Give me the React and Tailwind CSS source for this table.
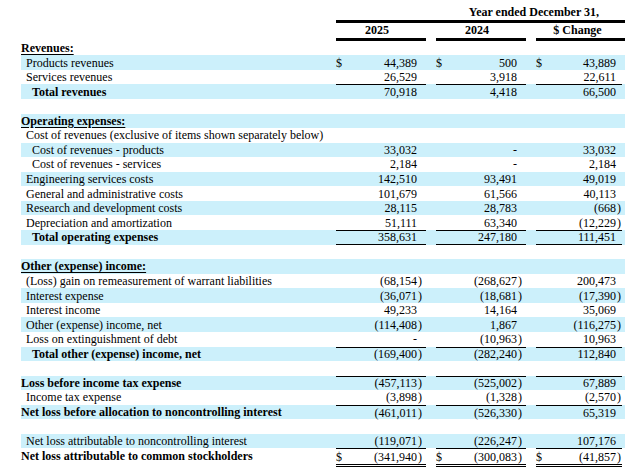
import React from 'react';

// rows of the statement; v = [2025, 2024, $ change]
const rows = [
  { label: 'Revenues:', kind: 'section' },
  { label: 'Products revenues', lvl: 1, shade: true, dollar: true, v: ['44,389', '500', '43,889'] },
  { label: 'Services revenues', lvl: 1, v: ['26,529', '3,918', '22,611'] },
  { label: 'Total revenues', lvl: 2, bold: true, shade: true, top: true, v: ['70,918', '4,418', '66,500'] },
  { blank: true },
  { label: 'Operating expenses:', kind: 'section', shade: true },
  { label: 'Cost of revenues (exclusive of items shown separately below)', lvl: 1 },
  { label: 'Cost of revenues - products', lvl: 2, shade: true, v: ['33,032', '-', '33,032'] },
  { label: 'Cost of revenues - services', lvl: 2, v: ['2,184', '-', '2,184'] },
  { label: 'Engineering services costs', lvl: 1, shade: true, v: ['142,510', '93,491', '49,019'] },
  { label: 'General and administrative costs', lvl: 1, v: ['101,679', '61,566', '40,113'] },
  { label: 'Research and development costs', lvl: 1, shade: true, v: ['28,115', '28,783', '(668)'] },
  { label: 'Depreciation and amortization', lvl: 1, v: ['51,111', '63,340', '(12,229)'] },
  { label: 'Total operating expenses', lvl: 2, bold: true, shade: true, top: true, bottom: true, v: ['358,631', '247,180', '111,451'] },
  { blank: true },
  { label: 'Other (expense) income:', kind: 'section', shade: true },
  { label: '(Loss) gain on remeasurement of warrant liabilities', lvl: 1, v: ['(68,154)', '(268,627)', '200,473'] },
  { label: 'Interest expense', lvl: 1, shade: true, v: ['(36,071)', '(18,681)', '(17,390)'] },
  { label: 'Interest income', lvl: 1, v: ['49,233', '14,164', '35,069'] },
  { label: 'Other (expense) income, net', lvl: 1, shade: true, v: ['(114,408)', '1,867', '(116,275)'] },
  { label: 'Loss on extinguishment of debt', lvl: 1, v: ['-', '(10,963)', '10,963'] },
  { label: 'Total other (expense) income, net', lvl: 2, bold: true, shade: true, top: true, v: ['(169,400)', '(282,240)', '112,840'] },
  { blank: true },
  { label: 'Loss before income tax expense', lvl: 0, bold: true, shade: true, top: true, v: ['(457,113)', '(525,002)', '67,889'] },
  { label: 'Income tax expense', lvl: 1, v: ['(3,898)', '(1,328)', '(2,570)'] },
  { label: 'Net loss before allocation to noncontrolling interest', lvl: 0, bold: true, shade: true, top: true, v: ['(461,011)', '(526,330)', '65,319'] },
  { blank: true },
  { label: 'Net loss attributable to noncontrolling interest', lvl: 1, shade: true, v: ['(119,071)', '(226,247)', '107,176'] },
  { label: 'Net loss attributable to common stockholders', lvl: 0, bold: true, top: true, double: true, dollar: true, v: ['(341,940)', '(300,083)', '(41,857)'] },
];

const cols = ['w-[90px] pr-[4px]', 'ml-[10px] w-[90px] pr-[4px]', 'ml-[10px] w-[86px] pr-[1px]'];
const indent = ['pl-0', 'pl-[5px]', 'pl-[11px]'];

const Amount = ({ value, dollar, row, className }) => {
  const neg = value.startsWith('(');
  const num = neg ? value.slice(0, -1) : value;
  let border = '';
  if (row.top) border += ' border-t border-black';
  if (row.bottom) border += ' border-b border-black';
  // the double rule sits just under the row, so the cell grows past it
  if (row.double) border += ' h-[18.5px] border-b-[3px] border-double border-black';
  else border += ' h-full';
  return (
    <div className={`${className} flex shrink-0 items-center self-start${border}`}>
      <span className="w-[8px]">{dollar ? '$' : ''}</span>
      <span className="flex-1 text-right">{num}</span>
      <span className="w-[5px] pl-[1px]">{neg ? ')' : ''}</span>
    </div>
  );
};

const Row = ({ row }) => {
  if (row.blank) return <div className="h-[14.57px]" />;
  return (
    <div className={`ml-[21px] flex h-[14.57px] w-[604px] leading-[14px] ${row.shade ? 'bg-[#ccf0fb]' : ''}`}>
      <div
        className={`flex w-[315px] shrink-0 items-center whitespace-nowrap ${row.kind === 'section' ? 'font-bold underline underline-offset-[2px]' : indent[row.lvl]} ${row.bold ? 'font-bold' : ''}`}
      >
        {row.label}
      </div>
      {row.v &&
        row.v.map((val, i) => <Amount key={i} value={val} dollar={row.dollar} row={row} className={cols[i]} />)}
    </div>
  );
};

export default function App() {
  return (
    <div className="h-[469px] w-[625px] overflow-hidden bg-white text-[12px] text-black [font-family:'Liberation_Serif',serif]">
      {/* column headings */}
      <div className="flex h-[20px] items-end justify-end pb-[1px] pr-[26px] font-bold leading-[14px]">
        Year ended December 31,
      </div>
      <div className="ml-[336px] h-[2.5px] w-[289px] bg-black" />
      <div className="ml-[336px] flex h-[15.5px] items-center font-bold leading-[14px]">
        <div className="w-[90px] pr-[8px] text-center">2025</div>
        <div className="ml-[10px] w-[90px] pr-[8px] text-center">2024</div>
        <div className="ml-[10px] w-[89px] pr-[6px] text-center">$ Change</div>
      </div>
      <div className="ml-[336px] flex h-[2.5px]">
        <div className="w-[90px] bg-black" />
        <div className="ml-[10px] w-[90px] bg-black" />
        <div className="ml-[10px] w-[89px] bg-black" />
      </div>
      <div className="h-[0.2px]" />
      {rows.map((r, i) => (
        <Row key={i} row={r} />
      ))}
    </div>
  );
}
